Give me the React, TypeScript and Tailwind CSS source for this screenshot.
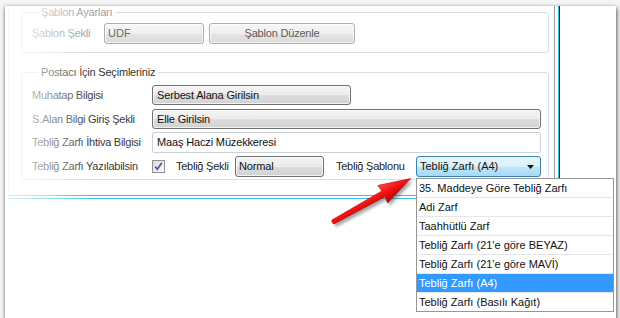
import React from "react";

const grayBox =
  "border border-[#707070] rounded-[3px] bg-[linear-gradient(to_bottom,#f4f4f4,#ebebeb_50%,#dddddd_51%,#d2d2d2)] shadow-[inset_0_0_0_1px_rgba(255,255,255,0.7)]";
const disabledBox =
  "border border-[#a9aeb2] rounded-[3px] bg-[linear-gradient(to_bottom,#f6f6f6,#efefef_50%,#e4e4e4_51%,#dcdcdc)] shadow-[inset_0_0_0_1px_rgba(255,255,255,0.7)]";

const items = [
  "35. Maddeye Göre Tebliğ Zarfı",
  "Adi Zarf",
  "Taahhütlü Zarf",
  "Tebliğ Zarfı (21'e göre BEYAZ)",
  "Tebliğ Zarfı (21'e göre MAVİ)",
  "Tebliğ Zarfı (A4)",
  "Tebliğ Zarfı (Basılı Kağıt)",
];

function Label({ children }: { children: React.ReactNode }) {
  return (
    <span className="w-[120px] shrink-0 text-[#3a3a3a] tracking-[-0.25px] whitespace-nowrap">
      {children}
    </span>
  );
}

export default function App() {
  return (
    <div className="w-[620px] h-[318px] bg-[#f4f4f4] overflow-hidden relative font-['Liberation_Sans',Arial,sans-serif] text-[11px] leading-[13px]">
      <div className="relative ml-[5px] w-[611px] h-[313px] bg-white shadow-[1px_2px_4px_rgba(0,0,0,0.6),-1px_0_3px_rgba(0,0,0,0.18)]">
        {/* frame */}
        <div className="ml-[3px] w-[551px] h-[193px] border-l border-l-[#cfdde4] border-r border-r-[#3ec1e4] border-b border-b-[#3ec1e4] shadow-[1px_0_0_#1b2a44]">
          <div className="w-[546px] h-[190px] border-r border-b border-[#9c9c9c] pl-[12px]">
            {/* Şablon Ayarları */}
            <fieldset className="mt-[6px] w-[528px] border border-[#d5dfe5] rounded-[3px] pl-[10px] pt-[4px] pb-[8px]">
              <legend className="ml-[6px] px-[3px] leading-[13px] text-[#a0a0a0] tracking-[-0.2px]">
                Şablon Ayarları
              </legend>
              <div className="flex items-center h-[21px]">
                <span className="w-[72px] shrink-0 text-[#9a9a9a] tracking-[-0.25px]">Şablon Şekli</span>
                <div className={`${disabledBox} w-[100px] h-[21px] flex items-center pl-[3px] text-[#6a6a6a]`}>UDF</div>
                <div className={`${disabledBox} ml-[5px] w-[146px] h-[21px] flex items-center justify-center text-[#5a5a5a] tracking-[-0.2px]`}>
                  Şablon Düzenle
                </div>
              </div>
            </fieldset>

            {/* Postacı İçin Seçimleriniz */}
            <fieldset className="mt-[13px] w-[528px] border border-[#d5dfe5] rounded-[3px] pl-[10px] pt-[6px] pb-[2px]">
              <legend className="ml-[6px] px-[3px] leading-[13px] text-[#333] tracking-[-0.2px]">
                Postacı İçin Seçimleriniz
              </legend>
              <div className="flex items-center h-[20px]">
                <Label>Muhatap Bilgisi</Label>
                <div className={`${grayBox} w-[199px] h-[20px] flex items-center pl-[4px] text-[#111] tracking-[-0.15px]`}>
                  Serbest Alana Girilsin
                </div>
              </div>
              <div className="flex items-center h-[20px] mt-[4px]">
                <Label>S.Alan Bilgi Giriş Şekli</Label>
                <div className={`${grayBox} w-[389px] h-[20px] flex items-center pl-[4px] text-[#111] tracking-[-0.15px]`}>
                  Elle Girilsin
                </div>
              </div>
              <div className="flex items-center h-[21px] mt-[3px]">
                <Label>Tebliğ Zarfı İhtiva Bilgisi</Label>
                <div className="w-[389px] h-[21px] border border-[#c9d1d9] rounded-[2px] bg-white flex items-center pl-[4px] text-[#111] tracking-[-0.15px]">
                  Maaş Haczi Müzekkeresi
                </div>
              </div>
              <div className="flex items-center h-[21px] mt-[3px]">
                <Label>Tebliğ Zarfı Yazılabilsin</Label>
                <div className="w-[13px] h-[13px] border border-[#8e8f8f] bg-[linear-gradient(135deg,#dcdcdc,#fbfbfb)] flex items-center justify-center">
                  <svg width="11" height="11" viewBox="0 0 11 11">
                    <path d="M2.2 5.6 L4.4 8.3 L8.8 1.8" fill="none" stroke="#4a5c9c" strokeWidth="1.7" />
                  </svg>
                </div>
                <span className="ml-[11px] w-[59px] shrink-0 text-[#1e1e1e] tracking-[-0.25px]">Tebliğ Şekli</span>
                <div className={`${grayBox} w-[89px] h-[21px] flex items-center pl-[3px] text-[#111] tracking-[-0.15px]`}>Normal</div>
                <span className="ml-[12px] w-[80px] shrink-0 text-[#1e1e1e] tracking-[-0.25px]">Tebliğ Şablonu</span>
                <div className="relative w-[125px] h-[21px] border border-[#3c7fb1] rounded-[3px] bg-[linear-gradient(to_bottom,#eaf6fd,#d9f0fc_50%,#bee6fd_51%,#a7d9f5)] flex items-center pl-[3px] text-[#111]">
                  Tebliğ Zarfı (A4)
                  <svg className="absolute right-[5px] top-[8px]" width="8" height="5" viewBox="0 0 8 5">
                    <path d="M0 0 H7 L3.5 4 Z" fill="#111" />
                  </svg>
                </div>
              </div>
            </fieldset>
          </div>
        </div>

        {/* left fade of the screenshot */}
        <div className="absolute left-[3px] top-0 w-[85px] h-[300px] pointer-events-none bg-[linear-gradient(to_right,rgba(255,255,255,0.75),rgba(255,255,255,0.55)_40%,rgba(255,255,255,0))]" />
      </div>

      {/* dropdown list */}
      <div className="absolute left-[416px] top-[178px] w-[198px] h-[134px] border border-[#979797] bg-white text-[#111]">
        {items.map((it, i) => (
          <div
            key={it}
            className={
              (i === items.length - 1 ? "h-[18px] " : "h-[19px] border-b border-[#e6e6e6] ") +
              (i === 5 ? "bg-[#3399ff] text-white " : "") +
              "pl-[2px] leading-[18px] whitespace-nowrap"
            }
          >
            {it}
          </div>
        ))}
      </div>

      {/* red arrow */}
      <svg className="absolute left-[320px] top-[165px] pointer-events-none" width="100" height="70" viewBox="0 0 100 70">
        <defs>
          <filter id="blur" x="-20%" y="-40%" width="140%" height="180%">
            <feGaussianBlur stdDeviation="1.6" />
          </filter>
          <linearGradient id="red" x1="0" y1="0" x2="0" y2="1">
            <stop offset="0" stopColor="#ff4a4a" />
            <stop offset="0.5" stopColor="#f01010" />
            <stop offset="1" stopColor="#b80000" />
          </linearGradient>
        </defs>
        <g transform="translate(15 60) rotate(-29.2)" filter="url(#blur)" opacity="0.45">
          <path d="M0 -2.2 L58 -3.2 L57 -10 L89 0 L57 10 L58 3.2 L0 2.2 Z" fill="#333" strokeLinejoin="round" />
        </g>
        <g transform="translate(13 57) rotate(-29.2)">
          <path d="M0 -2.2 L58 -3.2 L57 -10 L89 0 L57 10 L58 3.2 L0 2.2 Q-2 0 0 -2.2 Z" fill="url(#red)" stroke="#c00000" strokeWidth="0.6" strokeLinejoin="round" />
        </g>
      </svg>
    </div>
  );
}
